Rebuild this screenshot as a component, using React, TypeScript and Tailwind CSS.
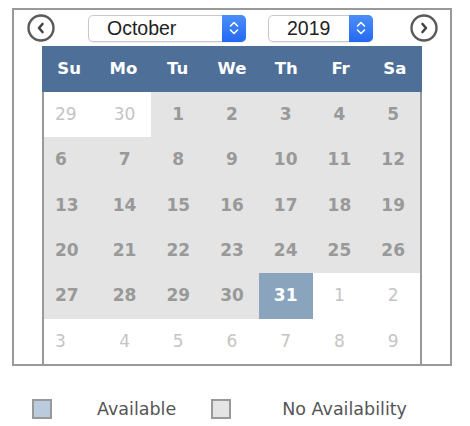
import React from "react";

const DAYS = ["Su", "Mo", "Tu", "We", "Th", "Fr", "Sa"];

type Cell = { n: number; kind: "out" | "none" | "avail" };

// October 2019, padded with the tail of September and head of November
const CELLS: Cell[] = [
  { n: 29, kind: "out" },
  { n: 30, kind: "out" },
  ...Array.from({ length: 29 }, (_, i) => ({ n: i + 1, kind: "none" as const })),
  { n: 30, kind: "none" },
  { n: 31, kind: "avail" },
  ...Array.from({ length: 9 }, (_, i) => ({ n: i + 1, kind: "out" as const })),
];

export default function App() {
  return (
    <div className="w-[470px] h-[426px] bg-white pt-2 pl-3 font-['DejaVu_Sans',Verdana,sans-serif]">
      {/* ============================ CALENDAR BOX ============================ */}
      <div className="w-[440px] h-[358px] border-2 border-[#999] flex flex-col">
        <div className="h-9 flex items-center">
          <NavButton dir="prev" className="ml-[13px]" />
          <Select label="October" className="ml-[33px] w-[158px]" />
          <Select label="2019" className="ml-[22px] w-[105px]" />
          <NavButton dir="next" className="ml-[37px]" />
        </div>

        <div className="ml-7 w-[380px] flex-1 flex flex-col">
          <div className="h-[46px] grid grid-cols-7 bg-[#4e6f97] text-white font-bold text-[16.5px]">
            {DAYS.map((d) => (
              <div key={d} className="flex items-center justify-center">
                {d}
              </div>
            ))}
          </div>
          <div className="flex-1 grid grid-cols-7 grid-rows-6 border-x-2 border-[#999] text-[17px]">
            {CELLS.map((c, i) => (
              <DayCell key={i} cell={c} first={i % 7 === 0} />
            ))}
          </div>
        </div>
      </div>

      {/* ============================ LEGEND ============================ */}
      <div className="mt-[30px] flex items-center text-[17.5px] text-[#555]">
        <span className="ml-5 w-5 h-5 border-2 border-[#999] bg-[#b9cbdc]" />
        <span className="ml-[45px]">Available</span>
        <span className="ml-[35px] w-5 h-5 border-2 border-[#999] bg-[#e4e4e4]" />
        <span className="ml-[51px]">No Availability</span>
      </div>
    </div>
  );
}

/* ------------------------------- day cell ------------------------------- */
function DayCell({ cell, first }: { cell: Cell; first: boolean }) {
  const align = first ? "justify-start pl-[11px]" : "justify-center";
  const look =
    cell.kind === "out"
      ? "bg-white text-[#c4c4c4]"
      : cell.kind === "avail"
        ? "bg-[#8aa4bd] text-white font-bold"
        : "bg-[#e4e4e4] text-[#999] font-bold";
  return <div className={"flex items-center " + align + " " + look}>{cell.n}</div>;
}

/* ------------------------------- select -------------------------------- */
function Select({ label, className }: { label: string; className: string }) {
  return (
    <div
      className={
        "h-[27px] flex rounded-[5px] border border-[#c9c9c9] bg-white font-['Liberation_Sans',Arial,sans-serif] text-[19.5px] text-[#222] shadow-[0_1px_1px_rgba(0,0,0,0.08)] " +
        className
      }
    >
      <span className="flex-1 pl-[18px] leading-[25px]">{label}</span>
      <span className="w-6 -my-px -mr-px rounded-r-[5px] bg-gradient-to-b from-[#4b8ef9] to-[#2468f2] flex items-center justify-center">
        <svg width="10" height="16" viewBox="0 0 10 16" fill="none" stroke="white" strokeWidth="1.6" strokeLinecap="round" strokeLinejoin="round">
          <path d="M1.5 6 L5 2.5 L8.5 6" />
          <path d="M1.5 10 L5 13.5 L8.5 10" />
        </svg>
      </span>
    </div>
  );
}

/* ------------------------------ nav button ------------------------------ */
function NavButton({ dir, className }: { dir: "prev" | "next"; className: string }) {
  return (
    <svg width="28" height="28" viewBox="0 0 28 28" className={className}>
      <circle cx="14" cy="14" r="12.5" fill="white" stroke="#5a5a5a" strokeWidth="2.4" />
      <path
        d={dir === "prev" ? "M15.5 10 L12 14 L15.5 18" : "M12.5 10 L16 14 L12.5 18"}
        fill="none"
        stroke="#444"
        strokeWidth="2.6"
        strokeLinecap="round"
        strokeLinejoin="round"
      />
    </svg>
  );
}
